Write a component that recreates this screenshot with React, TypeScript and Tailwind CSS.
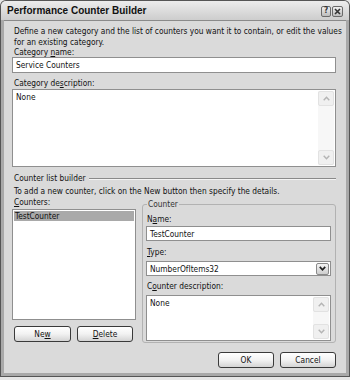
import React from "react";

function U({ children }: { children: React.ReactNode }) {
  return <span className="underline underline-offset-[1px]">{children}</span>;
}

function VScroll() {
  return (
    <div className="w-[16px] h-full flex flex-col justify-between bg-[#f7f7f7] shrink-0">
      <div className="h-[15px] border border-[#e2e2e2] rounded-[2px] bg-[#f0f0f0] flex items-center justify-center">
        <svg width="7" height="5" viewBox="0 0 7 5">
          <path d="M0.7 4.2 L3.5 1.2 L6.3 4.2" stroke="#b4b4b4" fill="none" strokeWidth="1.4" />
        </svg>
      </div>
      <div className="h-[15px] border border-[#e2e2e2] rounded-[2px] bg-[#f0f0f0] flex items-center justify-center">
        <svg width="7" height="5" viewBox="0 0 7 5">
          <path d="M0.7 0.8 L3.5 3.8 L6.3 0.8" stroke="#b4b4b4" fill="none" strokeWidth="1.4" />
        </svg>
      </div>
    </div>
  );
}

function Btn({ children, w }: { children: React.ReactNode; w: string }) {
  return (
    <div
      className={`${w} h-[16px] border border-[#3a3a3a] rounded-[3px] bg-linear-to-b from-white via-[#f2f2f2] to-[#d4d4d4] flex items-center justify-center leading-[10px]`}
    >
      {children}
    </div>
  );
}

export default function App() {
  return (
    <div className="w-[350px] h-[380px] bg-[#e6e6e6] font-['DejaVu_Sans_Condensed','Liberation_Sans',Arial,sans-serif] text-[8.3px] text-[#111]">
      <div className="w-[350px] h-[377px] bg-[#555] rounded-t-[6px] p-[1px] flex flex-col">
        <div className="flex-1 flex flex-col bg-[#a9a9a9] rounded-t-[5px] px-[3px] pb-[3px]">
          {/* title bar */}
          <div className="h-[19px] shrink-0 flex items-center pl-[3px] pr-[2px] bg-linear-to-b from-[#ececec] to-[#cdcdcd] -mx-[3px] rounded-t-[5px]">
            <span className="font-bold font-['Liberation_Sans',Arial,sans-serif] text-[10px] leading-[12px] text-[#111] ml-[3px] mt-[1px]">
              Performance Counter Builder
            </span>
            <div className="ml-auto flex items-center gap-[1px] mr-[4px] mt-[1px]">
              <div className="w-[10px] h-[11px] border border-[#6a6a6a] rounded-[2px] bg-linear-to-b from-[#f0f0f0] to-[#bcbcbc] flex items-center justify-center text-[8px] font-bold leading-[8px] text-[#333]">
                ?
              </div>
              <div className="w-[11px] h-[11px] border border-[#6a6a6a] rounded-[2px] bg-linear-to-b from-[#f0f0f0] to-[#bcbcbc] flex items-center justify-center">
                <svg width="7" height="7" viewBox="0 0 7 7">
                  <path d="M1 1 L6 6 M6 1 L1 6" stroke="#333" strokeWidth="1.6" />
                </svg>
              </div>
            </div>
          </div>
          {/* body */}
          <div className="flex-1 bg-[#dadada] border-t border-[#8a8a8a] pl-[8px] pr-[10px] pt-[5px] flex flex-col">
            <div className="leading-[11px] pl-[2px] whitespace-nowrap">
              Define a new category and the list of counters you want it to contain, or edit the values
              <br />
              for an existing category.
            </div>
            <div className="leading-[9px] pl-[2px] mt-[0px]">
              Category <U>n</U>ame:
            </div>
            <div className="h-[16px] mt-[0px] bg-white border border-[#8f8f8f] flex items-center pl-[3px] leading-[10px]">
              Service Counters
            </div>
            <div className="leading-[10px] pl-[2px] mt-[5px]">
              Category de<U>s</U>cription:
            </div>
            <div className="h-[78px] mt-[1px] bg-white border border-[#8f8f8f] flex p-[1px]">
              <div className="flex-1 pl-[2px] pt-[1px] leading-[10px]">None</div>
              <VScroll />
            </div>
            <div className="mt-[6px] flex items-center leading-[10px] pl-[2px]">
              <span>Counter list builder</span>
              <div className="flex-1 ml-[3px] mt-[1px] border-t border-[#8a8a8a] border-b border-b-[#f4f4f4] h-[2px]" />
            </div>
            <div className="mt-[3px] leading-[10px] pl-[2px]">
              To add a new counter, click on the New button then specify the details.
            </div>
            <div className="flex gap-[6px] mt-[1px]">
              {/* left column */}
              <div className="w-[124px] flex flex-col">
                <div className="leading-[10px] pl-[2px]">
                  <U>C</U>ounters:
                </div>
                <div className="h-[111px] mt-[2px] bg-white border border-[#8f8f8f] p-[1px]">
                  <div className="h-[10px] bg-[#a9a9a9] leading-[10px] pl-[1px]">TestCounter</div>
                </div>
                <div className="flex gap-[6px] mt-[6px] pl-[2px]">
                  <Btn w="w-[57px]">
                    Ne<U>w</U>
                  </Btn>
                  <Btn w="w-[56px]">
                    <U>D</U>elete
                  </Btn>
                </div>
              </div>
              {/* right column */}
              <div className="flex-1 pt-[7px]">
                <div className="relative h-[139px] border border-[#b2b2b2] rounded-[3px] pl-[3px] pr-[4px] pt-[9px] flex flex-col">
                  <div className="absolute -top-[6px] left-[4px] bg-[#dadada] px-[1px] leading-[10px] text-[#333]">
                    Counter
                  </div>
                  <div className="leading-[10px] pl-[1px]">
                    N<U>a</U>me:
                  </div>
                  <div className="h-[15px] mt-[2px] bg-white border border-[#8f8f8f] flex items-center pl-[3px] leading-[10px]">
                    TestCounter
                  </div>
                  <div className="leading-[10px] pl-[1px] mt-[6px]">
                    <U>T</U>ype:
                  </div>
                  <div className="h-[15px] mt-[4px] bg-white border border-[#8f8f8f] flex items-center pl-[3px] pr-[1px] leading-[10px]">
                    <span className="flex-1">NumberOfItems32</span>
                    <div className="w-[13px] h-[12px] border border-[#8a8a8a] rounded-[2px] bg-linear-to-b from-[#f4f4f4] to-[#cdcdcd] flex items-center justify-center">
                      <svg width="7" height="5" viewBox="0 0 7 5">
                        <path d="M0.8 0.9 L3.5 3.8 L6.2 0.9" stroke="#222" fill="none" strokeWidth="1.7" />
                      </svg>
                    </div>
                  </div>
                  <div className="leading-[10px] pl-[1px] mt-[5px]">
                    C<U>o</U>unter description:
                  </div>
                  <div className="h-[46px] mt-[4px] bg-white border border-[#8f8f8f] flex p-[1px]">
                    <div className="flex-1 pl-[2px] pt-[1px] leading-[10px]">None</div>
                    <VScroll />
                  </div>
                </div>
              </div>
            </div>
            <div className="flex justify-end gap-[6px] mt-[9px]">
              <Btn w="w-[56px]">OK</Btn>
              <Btn w="w-[56px]">Cancel</Btn>
            </div>
          </div>
        </div>
      </div>
    </div>
  );
}
